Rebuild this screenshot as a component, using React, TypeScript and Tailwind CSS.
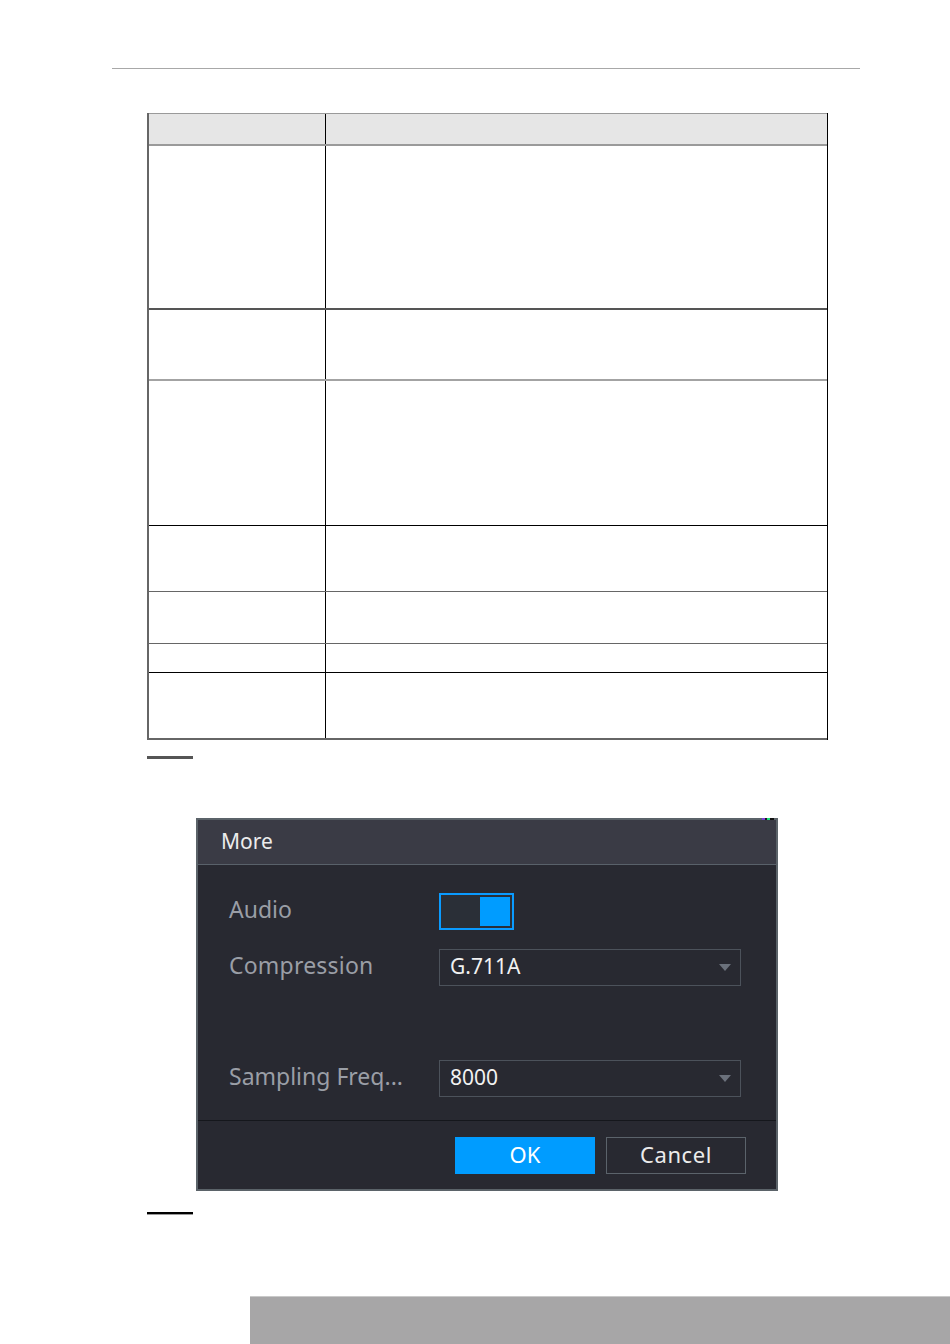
import React from "react";

const rows: { h: string; b: string }[] = [
  { h: "h-[164px]", b: "border-b-2 border-[#555555]" },
  { h: "h-[71px]", b: "border-b-2 border-[#a3a3a3]" },
  { h: "h-[145px]", b: "border-b border-black" },
  { h: "h-[66px]", b: "border-b border-[#666666]" },
  { h: "h-[52px]", b: "border-b border-[#666666]" },
  { h: "h-[29px]", b: "border-b border-black" },
  { h: "h-[67px]", b: "border-b-2 border-[#666666]" },
];

function Caret() {
  return (
    <svg width="12" height="8" viewBox="0 0 12 8" className="block">
      <path d="M0 0H12L6 7Z" fill="#6b717c" />
    </svg>
  );
}

export default function App() {
  const font = { fontFamily: '"Noto Sans", "Open Sans", sans-serif' };
  return (
    <div className="w-[950px] h-[1344px] bg-white overflow-hidden flex flex-col" style={font}>
      <div className="h-[68px] shrink-0" />
      <div className="ml-[112px] w-[748px] h-px bg-[#a8a8a8] shrink-0" />
      <div className="h-[44px] shrink-0" />
      {/* table */}
      <div className="ml-[147px] w-[681px] flex flex-col border-l-2 border-l-[#666666] border-r border-r-black shrink-0">
        <div className="h-[33px] grid grid-cols-[177px_1fr] bg-[#e6e6e6] border-t border-[#9a9a9a] border-b-2 border-b-[#9a9a9a]">
          <div className="border-r border-black" />
          <div />
        </div>
        {rows.map((r, i) => (
          <div key={i} className={`grid grid-cols-[177px_1fr] ${r.h} ${r.b}`}>
            <div className="border-r border-black" />
            <div />
          </div>
        ))}
      </div>
      <div className="h-[16px] shrink-0" />
      <div className="ml-[147px] w-[46px] h-[3px] bg-[#555555] shrink-0" />
      <div className="h-[59px] shrink-0" />
      {/* dialog */}
      <div className="relative ml-[196px] w-[582px] h-[373px] border-2 border-[#5b6369] bg-[#282931] flex flex-col shrink-0">
        <div className="absolute -top-[2px] right-[2px] flex h-[2px]">
          <div className="w-[3px] bg-[#7b3fd6]" />
          <div className="w-[2px] bg-[#1a1a1a]" />
          <div className="w-[3px] bg-[#20e080]" />
          <div className="w-[4px] bg-[#111]" />
        </div>
        <div className="h-[45px] bg-[#3a3b45] border-b border-[#59616a] flex items-center pl-[23px] shrink-0">
          <span className="text-[21px] text-[#ececec] leading-none pb-[1px]">More</span>
        </div>
        <div className="flex-1 flex flex-col pt-[28px] pl-[31px]">
          <div className="flex items-center h-[37px]">
            <span className="w-[210px] text-[23px] text-[#9a9ea6] leading-none pb-[4px]">Audio</span>
            <div className="w-[75px] h-[37px] border-2 border-[#0a9bff] bg-[#2a2f37] flex justify-end items-center pr-[2px]">
              <div className="w-[30px] h-[29px] bg-[#009cff]" />
            </div>
          </div>
          <div className="h-[19px]" />
          <div className="flex items-center h-[37px]">
            <span className="w-[210px] text-[23px] text-[#9a9ea6] leading-none pb-[4px] tracking-[0.2px]">Compression</span>
            <div className="w-[302px] h-[37px] border border-[#4c525b] flex items-center justify-between pl-[10px] pr-[9px]">
              <span className="text-[21px] text-[#f2f2f2] leading-none pb-[2px]">G.711A</span>
              <Caret />
            </div>
          </div>
          <div className="h-[74px]" />
          <div className="flex items-center h-[37px]">
            <span className="w-[210px] text-[23px] text-[#9a9ea6] leading-none pb-[4px] whitespace-nowrap">Sampling Freq...</span>
            <div className="w-[302px] h-[37px] border border-[#4c525b] flex items-center justify-between pl-[10px] pr-[9px]">
              <span className="text-[21px] text-[#f2f2f2] leading-none pb-[2px]">8000</span>
              <Caret />
            </div>
          </div>
        </div>
        <div className="h-[69px] border-t border-[#15171c] flex items-start justify-end pt-[16px] pr-[30px] gap-[11px] shrink-0">
          <div className="w-[140px] h-[37px] bg-[#009cff] flex items-center justify-center">
            <span className="text-[22px] text-white leading-none pb-[3px]">OK</span>
          </div>
          <div className="w-[140px] h-[37px] border border-[#5b636b] flex items-center justify-center">
            <span className="text-[22px] text-[#ececec] leading-none pb-[3px] tracking-[0.6px]">Cancel</span>
          </div>
        </div>
      </div>
      <div className="h-[21px] shrink-0" />
      <div className="ml-[147px] w-[46px] h-[2px] bg-black shrink-0" />
      <div className="ml-[147px] w-[46px] h-px bg-[#9a9a9a] shrink-0" />
      <div className="h-[81px] shrink-0" />
      <div className="ml-[250px] w-[700px] h-[48px] bg-[#a7a6a7] border-t border-[#c9c9c9] shrink-0" />
    </div>
  );
}
